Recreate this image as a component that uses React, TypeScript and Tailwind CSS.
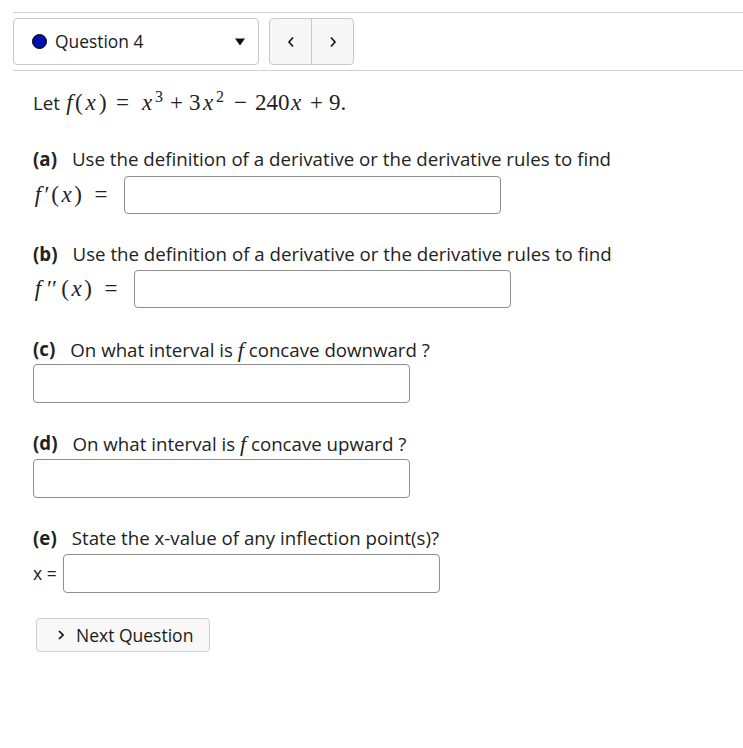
import React from "react"

const sans = "font-['Open_Sans',sans-serif]"
const serif = "font-['Liberation_Serif',serif]"

function Tok({ w, italic, children }: { w: string; italic?: boolean; children: React.ReactNode }) {
  return <span className={`inline-block text-center ${w} ${italic ? "italic" : ""}`}>{children}</span>
}

function Sup({ w, children }: { w: string; children: React.ReactNode }) {
  return <span className={`inline-block align-[0.5em] text-left text-[16px] ${w}`}>{children}</span>
}

function AnswerBox({ tall, className = "" }: { tall?: boolean; className?: string }) {
  return (
    <div
      className={`${tall ? "h-[39px]" : "h-[38px]"} w-[377px] rounded-[4px] border border-[#8f8f8f] bg-white ${className}`}
    />
  )
}

function Part({ label, children }: { label: string; children: React.ReactNode }) {
  return (
    <div className="flex h-6 items-center whitespace-nowrap text-[18.7px] text-[#222]">
      <span className="font-bold">({label})</span>
      <span className="ml-[15px]">{children}</span>
    </div>
  )
}

function DerivLabel({ primes }: { primes: number }) {
  return (
    <span className={`${serif} flex items-center text-[23px] text-[#222] ${primes === 1 ? "w-[91px]" : "w-[101px]"}`}>
      <Tok w="w-[10px]" italic>
        f
      </Tok>
      <Tok w={primes === 1 ? "w-[8px]" : "w-[18px]"}>{primes === 1 ? "′" : "′′"}</Tok>
      <Tok w="w-[8px]">(</Tok>
      <Tok w="w-[15px]" italic>
        x
      </Tok>
      <Tok w="w-[8px]">)</Tok>
      <Tok w="w-[38px]">=</Tok>
    </span>
  )
}

export default function App() {
  return (
    <div className={`${sans} min-h-[748px] w-[743px] bg-white pt-3 text-[#1a1a1a]`}>
      <div className="ml-[13px] border-y border-[#d0d0d0] pt-[5px] pb-[5px]">
        <div className="flex items-center gap-[10px]">
          <div className="flex h-[47px] w-[246px] items-center rounded-[4px] border border-[#c8c8c8] bg-white pl-[18px] pr-[13px]">
            <span className="h-[15px] w-[15px] rounded-full border border-black bg-[#0011aa]" />
            <span className="ml-[8px] text-[17.4px] text-[#1a1a1a]">Question 4</span>
            <svg className="ml-auto" width="10" height="8" viewBox="0 0 10 8">
              <path d="M0 0.5 H10 L5 7.5 Z" fill="#111" />
            </svg>
          </div>
          <div className="flex h-[47px] w-[85px] rounded-[4px] border border-[#c8c8c8] bg-[#f7f7f7]">
            <div className="flex w-[42px] items-center justify-center border-r border-[#c8c8c8]">
              <svg width="8" height="12" viewBox="0 0 8 12">
                <path d="M6 1.5 L2 6 L6 10.5" fill="none" stroke="#111" strokeWidth="1.6" />
              </svg>
            </div>
            <div className="flex flex-1 items-center justify-center">
              <svg width="8" height="12" viewBox="0 0 8 12">
                <path d="M2 1.5 L6 6 L2 10.5" fill="none" stroke="#111" strokeWidth="1.6" />
              </svg>
            </div>
          </div>
        </div>
      </div>

      <div className="pl-[33px]">
        <div className="mt-[20px] flex h-6 items-center whitespace-nowrap text-[18.7px] text-[#222]">
          <span className="w-[31px]">Let</span>
          <span className={`${serif} text-[23px]`}>
            <Tok w="w-[11px]" italic>
              f
            </Tok>
            <Tok w="w-[7px]">(</Tok>
            <Tok w="w-[17px]" italic>
              x
            </Tok>
            <Tok w="w-[7px]">)</Tok>
            <Tok w="w-[33px]">=</Tok>
            <Tok w="w-[16px]" italic>
              x
            </Tok>
            <Sup w="w-[9px]">3</Sup>
            <Tok w="w-[25px]">+</Tok>
            <Tok w="w-[11px]">3</Tok>
            <Tok w="w-[16px]" italic>
              x
            </Tok>
            <Sup w="w-[10px]">2</Sup>
            <Tok w="w-[29px]">−</Tok>
            <Tok w="w-[33px]">240</Tok>
            <Tok w="w-[16px]" italic>
              x
            </Tok>
            <Tok w="w-[25px]">+</Tok>
            <span className="inline-block">9.</span>
          </span>
        </div>

        <div className="mt-[32px]">
          <Part label="a">Use the definition of a derivative or the derivative rules to find</Part>
          <div className="mt-[5px] flex items-center">
            <DerivLabel primes={1} />
            <AnswerBox />
          </div>
        </div>

        <div className="mt-[28px]">
          <Part label="b">Use the definition of a derivative or the derivative rules to find</Part>
          <div className="mt-[4px] flex items-center">
            <DerivLabel primes={2} />
            <AnswerBox />
          </div>
        </div>

        <div className="mt-[29px]">
          <Part label="c">
            On what interval is <span className={`${serif} text-[22px] italic`}>f</span> concave downward ?
          </Part>
          <AnswerBox tall className="mt-[3px]" />
        </div>

        <div className="mt-[28px]">
          <Part label="d">
            On what interval is <span className={`${serif} text-[22px] italic`}>f</span> concave upward ?
          </Part>
          <AnswerBox tall className="mt-[4px]" />
        </div>

        <div className="mt-[28px]">
          <Part label="e">State the x-value of any inflection point(s)?</Part>
          <div className="mt-[4px] flex items-center">
            <span className="w-[30px] whitespace-nowrap text-[17.5px] text-[#222]">x =</span>
            <AnswerBox tall />
          </div>
        </div>

        <button
          type="button"
          className="mt-[25px] ml-[3px] flex h-[34px] w-[174px] items-center rounded-[4px] border border-[#cfcfcf] bg-[#f8f8f8] pl-[20px] text-[17.5px] text-[#1a1a1a]"
        >
          <svg width="8" height="12" viewBox="0 0 8 12">
            <path d="M2 2 L6 6 L2 10" fill="none" stroke="#111" strokeWidth="1.7" />
          </svg>
          <span className="ml-[11px]">Next Question</span>
        </button>
      </div>
    </div>
  )
}
